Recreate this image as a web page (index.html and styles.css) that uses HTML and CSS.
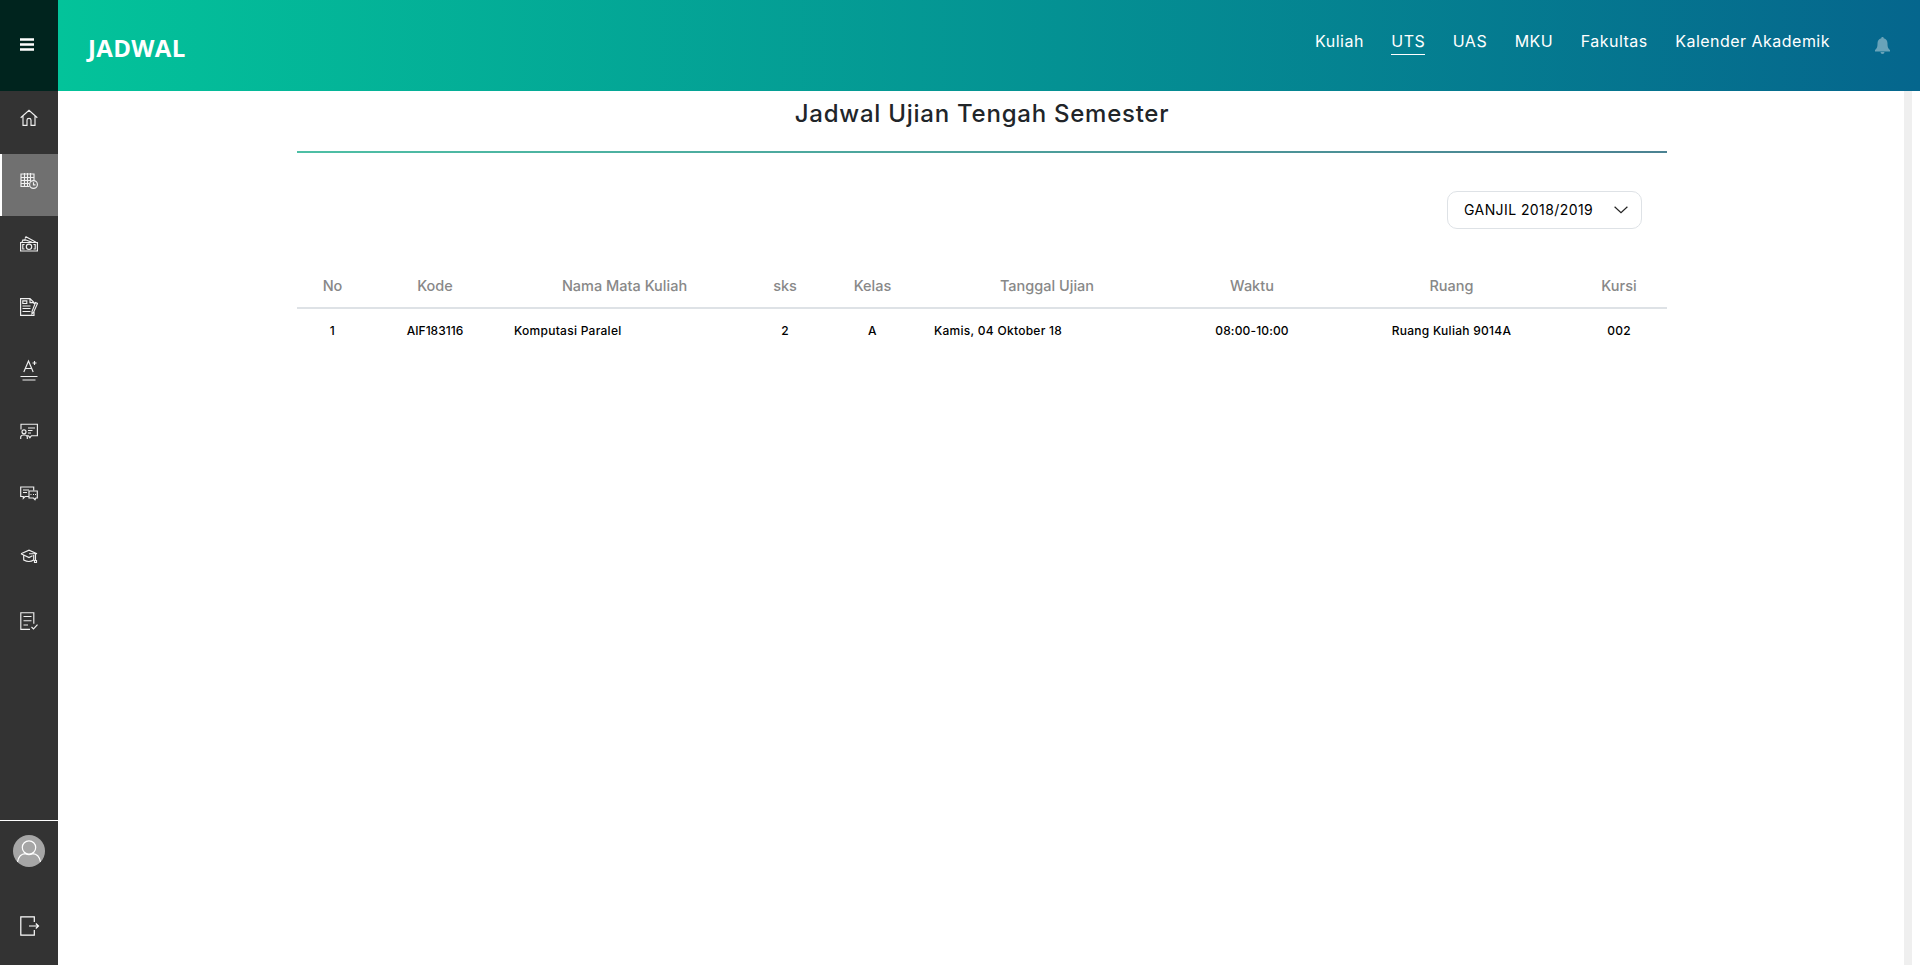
FILE: index.html
```html
<!DOCTYPE html>
<html lang="id">
<head>
<meta charset="utf-8">
<title>Jadwal</title>
<link rel="stylesheet" href="styles.css">
</head>
<body>
<div class="app">
  <aside class="sidebar">
    <button class="menu-btn" aria-label="Menu"><svg width="14" height="13"><path d="M0 1.500h14M0 6.500h14M0 11.500h14" stroke="#fff" stroke-width="2.300"/></svg></button>
    <nav class="side-nav">
      <a class="side-item"><svg class="icon" viewBox="0 0 18 18"><path d="M.7 8.700L9 1.300l8.300 7.400M3 7v9.300h4v-5.300q0-1.700 2-1.700t2 1.700v5.300h4V7"/></svg></a>
      <a class="side-item active"><svg class="icon" viewBox="0 0 18 18"><path d="M9.500 14.500H1V2h13v6.500M1 5.500h13M1 8.500h10M1 11.500h8M4.500 1v13.500M7.500 1v13.500M10.500 1v8.500"/><circle cx="13.500" cy="12.500" r="3.900"/><path d="M13.500 10.300v2.500h2"/></svg></a>
      <a class="side-item"><svg class="icon" viewBox="0 0 18 18"><path d="M.6 7.500h16.800v8.500H.6zM4.500 9.500H2.800v4.500h1.700M13.500 9.500h1.700v4.500h-1.700M2 7l1-2 2.500.5M5 3.500L6 1.700l10 5.500M4.500 4.500l7.500 2.700"/><circle cx="9" cy="11.800" r="2.700"/></svg></a>
      <a class="side-item"><svg class="icon" viewBox="0 0 18 18"><path d="M14 13v4.300H.6V.6h9.400l4 4v1.500M10 .6v4h4M2.800 2.800h4v2.700h-4zM2.500 8h8M2.500 10.500h8M2.500 13.500h8M15.500 4.500l2 1-4 9-1.500 1.200v-2.200z"/></svg></a>
      <a class="side-item"><svg class="icon icon-grade" viewBox="0 0 18 22"><path d="M3.800 13L8.500 2l4.700 11M5.300 9.500h6.400M14.500 2v4M12.500 4h4M.5 17.500h17M2.500 21h13"/></svg></a>
      <a class="side-item up"><svg class="icon" viewBox="0 0 18 18"><path d="M1 7.500V2.200h16.400v11.500h-6l-1.500 2-1.500-2H7M8 6h7M8 8.500h4.500M8 11h3"/><circle cx="4" cy="9.800" r="2"/><path d="M.7 17v-2q0-2 3.300-2t3.300 2v2"/></svg></a>
      <a class="side-item up2"><svg class="icon" viewBox="0 0 18 18"><path d="M9 12.500H5l-1.700 1.800V12.500H.7V3h13v3.500M3 6h6M3 8.500h4"/><path d="M9 7h8.300v7h-1.500l-.8 1.700L13.500 14H9zM10.500 10.500h1M13 10.500h1M15 10.500h1"/></svg></a>
      <a class="side-item up3"><svg class="icon" viewBox="0 0 18 18"><path d="M1 6.700L9 3.200l8 3.500H9M1 6.700l8 3.800 3.500-1.700M3.700 8.500v4.500q5.300 3 10 0V8M15.500 6.700v7M14.500 13.500h2v2h-2z"/></svg></a>
      <a class="side-item up1"><svg class="icon" viewBox="0 0 18 18"><path d="M10 17.300H.8V.7h13v11M3.500 4.500h8M3.500 8.700h8M3.500 13h4.500M11.500 15l2 2 4-4.300"/></svg></a>
    </nav>
    <div class="account">
      <span class="avatar"><svg viewBox="0 0 32 32"><circle cx="16" cy="12.500" r="6.700"/><path d="M4.500 27q1.500-8 8-8.300 3.500 2 7 0 6.500.3 8 8.300"/></svg></span>
      <a class="logout"><svg width="20" height="20" viewBox="0 0 20 20"><path d="M14.300 6V.8H.8v18.400h13.500V14M9 10h9.300M15.800 7.500l2.700 2.500-2.700 2.500"/></svg></a>
    </div>
  </aside>
  <div class="page">
    <header class="topbar">
      <h1 class="brand">JADWAL</h1>
      <nav class="tabs">
        <a class="tab">Kuliah</a><a class="tab current">UTS</a><a class="tab">UAS</a><a class="tab">MKU</a><a class="tab">Fakultas</a><a class="tab">Kalender Akademik</a>
      </nav>
      <svg class="bell" width="15" height="17" viewBox="0 0 15 17"><path d="M7.500 0c.8 0 1.200.5 1.200 1.200C11.500 1.800 12.500 4 12.500 6.500c0 4 .8 5 2.500 6.500v1.500H0V13c1.700-1.500 2.500-2.500 2.500-6.500 0-2.500 1-4.700 3.800-5.300C6.300.5 6.700 0 7.500 0zM5.500 15h4a2 2 0 0 1-4 0z"/></svg>
    </header>
    <main class="content">
      <h2 class="title">Jadwal Ujian Tengah Semester</h2>
      <div class="rule"></div>
      <div class="filter">
        <button class="select"><span>GANJIL 2018/2019</span><svg width="14" height="8" viewBox="0 0 14 8"><path d="M.6.800L7 6.800 13.400.8"/></svg></button>
      </div>
      <table class="schedule">
        <colgroup><col class="c-no"><col class="c-kode"><col class="c-nama"><col class="c-sks"><col class="c-kelas"><col class="c-tanggal"><col class="c-waktu"><col class="c-ruang"><col class="c-kursi"></colgroup>
        <thead><tr><th>No</th><th>Kode</th><th>Nama Mata Kuliah</th><th>sks</th><th>Kelas</th><th>Tanggal Ujian</th><th>Waktu</th><th>Ruang</th><th>Kursi</th></tr></thead>
        <tbody><tr><td>1</td><td class="code">AIF183116</td><td class="left">Komputasi Paralel</td><td>2</td><td>A</td><td class="left">Kamis, 04 Oktober 18</td><td class="time">08:00-10:00</td><td>Ruang Kuliah 9014A</td><td>002</td></tr></tbody>
      </table>
    </main>
  </div>
</div>
</body>
</html>
```
FILE: styles.css
```css
* { box-sizing: border-box; }
body { margin: 0; font-family: Inter, sans-serif; background: #fff; overflow: hidden; }
button { font: inherit; border: 0; padding: 0; }
svg { display: block; fill: none; flex: none; }
.app { display: flex; height: 965px; }

.sidebar { width: 58px; flex: none; background: #333; display: flex; flex-direction: column; }
.menu-btn { height: 91px; background: #00241e; padding: 0 0 3px 20px; display: flex; align-items: center; }
.side-nav { flex: 1; }
.side-item { height: 63px; display: flex; align-items: center; justify-content: center; padding-bottom: 9px; }
.side-item.active { height: 62px; margin-bottom: 1px; background: #707070; border-left: 2px solid #fff; padding-right: 2px; }
.icon { width: 18px; height: 18px; stroke: #f0f0f0; stroke-width: 1.15; }
.icon-grade { height: 22px; }
.side-item.up { padding-bottom: 13px; }
.side-item.up2 { padding-bottom: 15px; }
.side-item.up3 { padding-bottom: 15px; }
.side-item.up1 { padding-bottom: 11px; }
.account { height: 145px; border-top: 1px solid #fff; display: flex; flex-direction: column; align-items: center; padding-top: 14px; gap: 49px; }
.avatar { width: 32px; height: 32px; margin-right: 1px; border-radius: 50%; background: #a6a6a6; overflow: hidden; }
.logout { margin-left: 2px; }
.avatar svg, .logout svg { stroke: #fff; stroke-width: 1.200; }

.page { flex: 1; min-width: 0; }
.topbar { height: 91px; display: flex; align-items: flex-start; background: linear-gradient(90deg, #03c39a, #05668d); padding-left: 30px; }
.brand { margin: 31px auto 0 0; font: bold 24px/33px "Open Sans", sans-serif; letter-spacing: .35px; color: #fff; }
.tabs { display: flex; gap: 27.500px; padding-top: 30px; }
.tab { color: #fff; font-size: 16px; letter-spacing: .48px; line-height: 23px; height: 25px; white-space: nowrap; }
.tab.current { border-bottom: 1px solid #fff; }
.bell { fill: #69a3b9; margin: 37px 30px 0 45px; }

.content { height: 874px; border-right: 8px solid #efefef; margin-right: 8px; padding: 8px 237px 0 239px; }
.title { margin: 0; font-size: 24px; font-weight: 500; letter-spacing: .75px; line-height: 30px; color: #212529; text-align: center; white-space: nowrap; }
.rule { height: 2px; margin-top: 22px; background: linear-gradient(90deg, #4dbfa5, #4b8292); }
.filter { display: flex; justify-content: flex-end; padding: 38px 25px 0 0; }
.select { width: 195px; height: 38px; border: 1px solid #dee2e6; border-radius: 10px; background: #fff; display: flex; align-items: center; justify-content: space-between; padding: 0 13px 1px 16px; font-size: 14px; letter-spacing: .42px; color: #000; white-space: nowrap; }
.select svg { stroke: #222; stroke-width: 1.200; }
.schedule { width: 1370px; margin-top: 33px; table-layout: fixed; border-collapse: separate; border-spacing: 0; }
.schedule th { height: 47px; padding: 1px 0 0; font-size: 14.500px; font-weight: 500; color: #888; border-bottom: 2px solid #dee2e6; }
.schedule td { height: 42px; padding: 0; font-size: 12px; font-weight: 500; letter-spacing: .27px; color: #000; text-align: center; }
.schedule td.code { letter-spacing: 0; }
.schedule td.time { letter-spacing: .15px; }
.schedule td.left { text-align: left; padding-left: 12px; }
.c-no { width: 71px; } .c-kode { width: 134px; } .c-nama { width: 245px; } .c-sks { width: 76px; } .c-kelas { width: 99px; }
.c-tanggal { width: 250px; } .c-waktu { width: 160px; } .c-ruang { width: 239px; } .c-kursi { width: 96px; }
```
